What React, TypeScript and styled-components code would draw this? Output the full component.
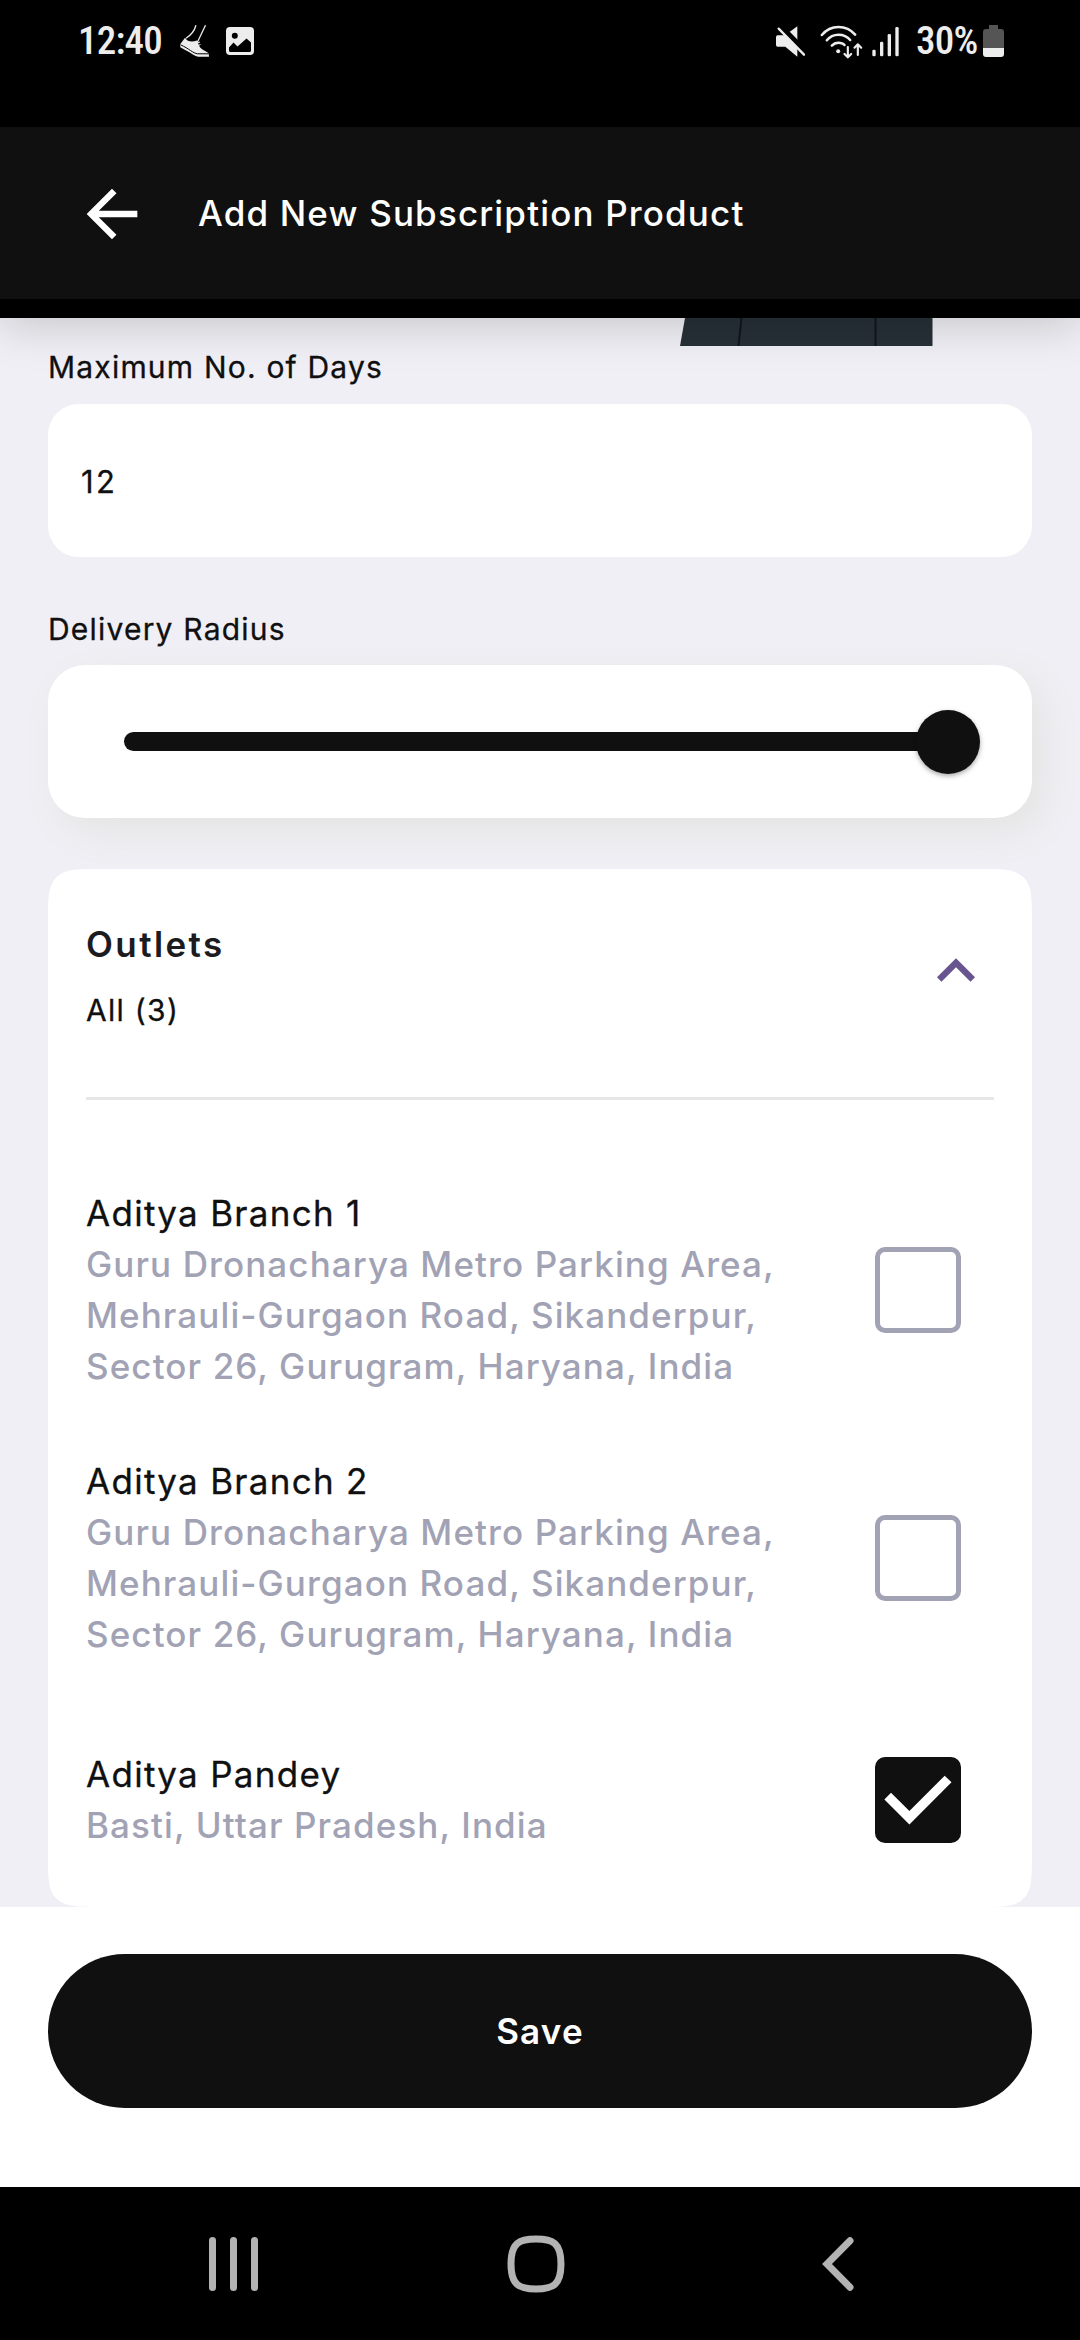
import React, { useState } from "react";
import styled, { createGlobalStyle, css } from "styled-components";

const ink = "#101010";
const muted = "#a2a2b5";
const canvas = "#f0eff5";
const statusTint = "#ededed";
const navTint = "#b3b3b3";

const GlobalStyle = createGlobalStyle`
  *, *::before, *::after { box-sizing: border-box; }
  body {
    margin: 0;
    background: ${canvas};
    font-family: Inter, "Liberation Sans", sans-serif;
    color: ${ink};
  }
`;

const Screen = styled.div`
  display: flex;
  flex-direction: column;
  width: 1080px;
  height: 2340px;
  overflow: hidden;
  background: ${canvas};
`;

/* Regular weight with slightly firmer strokes. */
const firmRegular = css`
  font-weight: 400;
  -webkit-text-stroke: 0.3px currentColor;
`;

/* ---------- status bar ---------- */

const TopArea = styled.header`
  position: relative;
  z-index: 1;
  flex: none;
  padding-bottom: 19px;
  background: #000;
  box-shadow: 0 8px 42px rgba(0, 0, 0, 0.17);
`;

const StatusBar = styled.div`
  display: flex;
  justify-content: space-between;
  height: 127px;
  padding: 0 76px 0 78px;
`;

const StatusGroup = styled.div`
  display: flex;
  align-items: center;
  height: 82px;
`;

const StatusText = styled.span<{ $width: number; $lead?: number }>`
  width: ${(p) => p.$width}px;
  margin-left: ${(p) => p.$lead ?? 0}px;
  font: 500 39px/46px Roboto, "Liberation Sans", sans-serif;
  font-stretch: 75%;
  letter-spacing: -0.8px;
  white-space: nowrap;
  color: ${statusTint};
`;

const StatusIcon = styled.svg<{ $lead?: number }>`
  display: block;
  flex: none;
  margin-left: ${(p) => p.$lead ?? 0}px;
  color: ${statusTint};
`;

/* ---------- app bar ---------- */

const AppBar = styled.div`
  display: flex;
  align-items: center;
  gap: 48px;
  height: 172px;
  padding: 1px 74px 0;
  background: ${ink};
  color: #fff;
`;

const IconButton = styled.button`
  display: block;
  flex: none;
  padding: 0;
  border: 0;
  background: none;
  color: inherit;
  svg { display: block; }
`;

const Title = styled.h1`
  margin: 0 0 2px;
  font-size: 35px;
  font-weight: 500;
  line-height: 42px;
  letter-spacing: 1.15px;
`;

/* ---------- form ---------- */

const Content = styled.main`
  display: flex;
  flex-direction: column;
  height: 1589px;
  padding: 0 48px;
`;

const Illustration = styled.svg`
  display: block;
  flex: none;
  margin: 0 0 3px 632px;
`;

const Field = styled.section`
  display: flex;
  flex-direction: column;
  gap: 18.5px;
`;

const Label = styled.label`
  ${firmRegular}
  font-size: 30px;
  line-height: 36px;
  letter-spacing: 1.2px;
`;

const panel = css`
  display: flex;
  align-items: center;
  height: 153px;
  background: #fff;
`;

const InputBox = styled.div`
  ${panel}
  ${firmRegular}
  margin-bottom: 54px;
  padding: 4px 33px 0;
  border-radius: 31px;
  font-size: 31px;
  line-height: 36px;
  letter-spacing: 2.4px;
`;

const SliderBox = styled.div`
  ${panel}
  margin-bottom: 51px;
  padding: 0 52px 0 76px;
  border-radius: 37px;
  box-shadow: 12px 14px 37px #e4e4e2;
`;

const Track = styled.div`
  flex: 1;
  height: 19px;
  margin-right: -32px;
  border-radius: 10px;
  background: ${ink};
`;

const Thumb = styled.div`
  width: 64px;
  height: 64px;
  border-radius: 50%;
  background: ${ink};
  box-shadow: 0 2px 5px rgba(0, 0, 0, 0.35);
`;

/* ---------- outlets ---------- */

const OutletCard = styled.section`
  display: flex;
  flex-direction: column;
  height: 1038px;
  padding: 54px 38px 31px;
  border-radius: 29px;
  background: #fff;
  @supports (corner-shape: squircle) {
    border-radius: 53px;
    corner-shape: squircle;
  }
`;

const CardHead = styled.div`
  display: flex;
  justify-content: space-between;
  align-items: flex-start;
  height: 177px;
  border-bottom: 3px solid #e7e7e7;
`;

const HeadText = styled.div`
  display: flex;
  flex-direction: column;
  gap: 27px;
`;

const HeadTitle = styled.h2`
  margin: 0;
  font-size: 35px;
  font-weight: 600;
  line-height: 42px;
  letter-spacing: 2.4px;
  color: #1c1b20;
`;

const HeadCount = styled.span`
  ${firmRegular}
  font-size: 30px;
  line-height: 36px;
  letter-spacing: 1.3px;
`;

const Expander = styled(IconButton)`
  margin-top: 10px;
  color: #68548e;
`;

const OutletList = styled.ul`
  display: flex;
  flex-direction: column;
  gap: 64px;
  margin: 0;
  padding: 88px 33px 0 0;
  list-style: none;
`;

const OutletRow = styled.li`
  display: flex;
  justify-content: space-between;
  align-items: center;
  min-height: 152px;
`;

const OutletText = styled.div`
  width: 730px;
  font-size: 35px;
  line-height: 51px;
`;

const OutletName = styled.div`
  ${firmRegular}
  letter-spacing: 1.28px;
`;

const OutletAddress = styled.div`
  font-weight: 500;
  letter-spacing: 1.1px;
  color: ${muted};
`;

const Checkbox = styled.button<{ $checked: boolean }>`
  display: block;
  flex: none;
  width: 86px;
  height: 86px;
  padding: 0;
  border: ${(p) => (p.$checked ? "0" : `5px solid ${muted}`)};
  border-radius: 10px;
  background: ${(p) => (p.$checked ? ink : "#fff")};
  svg { display: block; }
`;

/* ---------- footer ---------- */

const Footer = styled.footer`
  flex: none;
  height: 280px;
  padding: 47px 48px 0;
  background: #fff;
`;

const SaveButton = styled.button`
  display: flex;
  align-items: center;
  justify-content: center;
  width: 100%;
  height: 153.5px;
  padding: 0;
  border: 0;
  border-radius: 77px;
  background: ${ink};
  color: #fff;
  font: 600 35px/42px Inter, "Liberation Sans", sans-serif;
  letter-spacing: 1.2px;
`;

const NavBar = styled.nav`
  display: flex;
  align-items: center;
  justify-content: space-between;
  height: 153px;
  padding: 0 226px 0 208px;
  background: #000;
  color: ${navTint};
  svg { display: block; }
`;

const HomeGlyph = styled.svg`
  margin-right: 9px;
`;

const outlets = [
  {
    name: "Aditya Branch 1",
    address: ["Guru Dronacharya Metro Parking Area,", "Mehrauli-Gurgaon Road, Sikanderpur,", "Sector 26, Gurugram, Haryana, India"],
  },
  {
    name: "Aditya Branch 2",
    address: ["Guru Dronacharya Metro Parking Area,", "Mehrauli-Gurgaon Road, Sikanderpur,", "Sector 26, Gurugram, Haryana, India"],
  },
  { name: "Aditya Pandey", address: ["Basti, Uttar Pradesh, India"] },
];

const ShoeIcon = () => (
  <StatusIcon width="30" height="33" viewBox="0 0 30 33" fill="none">
    <path d="M16 .3C14.500 5.500 12.500 9.500 6 13.200" stroke="currentColor" strokeWidth="1.300" />
    <path d="M25.500.3 17.500 17" stroke="currentColor" strokeWidth="1.300" />
    <path
      d="M.2 19.300 5 12.700C7.500 16.800 12 17.300 17 15.500L19.500 21.500C21.500 25.500 27 25.500 28.800 29L29 31.700H18.500C15 31.700 12 28.300.3 22.300Z"
      fill="currentColor"
    />
    <path d="M.5 19.800C9 23.500 13 28.300 17.500 28.800H28.700" stroke="#000" strokeWidth="1" />
    <path d="M16 18.500 20 17M17.200 21 20.500 19.500" stroke="currentColor" strokeWidth="1" />
  </StatusIcon>
);

const PictureIcon = () => (
  <StatusIcon $lead={16} width="28" height="28" viewBox="0 0 28 28">
    <rect width="28" height="28" rx="4" fill="currentColor" />
    <circle cx="8.800" cy="8.700" r="3" fill="#000" />
    <path d="M3 20.500 7.500 15.500 11.500 19.500 20.500 11.500 25 15.500V23.500Q25 25 23.500 25H4.500Q3 25 3 23.500Z" fill="#000" />
  </StatusIcon>
);

const MuteIcon = () => (
  <StatusIcon width="31" height="33" viewBox="45 75 93 99" fill="none">
    <path d="M53 106H75L112 79V170L76 140H53Q48 140 48 134V112Q48 106 53 106Z" fill="currentColor" />
    <path d="M50 68 142 162" stroke="#000" strokeWidth="18" />
    <path d="M56 86 132 164" stroke="currentColor" strokeWidth="7" strokeLinecap="round" />
  </StatusIcon>
);

const WifiIcon = () => (
  <StatusIcon $lead={13} width="45" height="35" viewBox="176 70 134 105" fill="none" stroke="currentColor" strokeWidth="7.500" strokeLinecap="round" strokeLinejoin="round">
    <path d="M184 103Q204 79 234 79T284 102" />
    <path d="M199 119Q212 102 234 102T269 118" />
    <path d="M214 135Q222 126 234 126T252 133" />
    <circle cx="233" cy="152" r="6" fill="currentColor" stroke="none" />
    <path d="M262 139V170M252 160 262 170 272 160M292 163V131M282 141 292 131 302 141" strokeWidth="6.500" />
  </StatusIcon>
);

const SignalIcon = () => (
  <StatusIcon $lead={8} width="27" height="31" viewBox="336 77 81 93" fill="currentColor">
    <rect x="337" y="148" width="10" height="20" rx="4" />
    <rect x="360" y="124" width="10" height="44" rx="4" />
    <rect x="383" y="101" width="10" height="67" rx="4" />
    <rect x="406" y="80" width="10" height="88" rx="4" />
  </StatusIcon>
);

const BatteryIcon = () => (
  <StatusIcon width="21" height="32" viewBox="0 0 21 32">
    <path d="M6 0H15V4H18Q21 4 21 7V23H0V7Q0 4 3 4H6Z" fill="#555" />
    <path d="M0 23H21V29Q21 32 18 32H3Q0 32 0 29Z" fill="currentColor" />
  </StatusIcon>
);

export default function App() {
  const [selected, setSelected] = useState<string[]>(["Aditya Pandey"]);
  const toggle = (name: string) =>
    setSelected((s) => (s.includes(name) ? s.filter((n) => n !== name) : [...s, name]));

  return (
    <Screen>
      <GlobalStyle />
      <TopArea>
        <StatusBar>
          <StatusGroup>
            <StatusText $width={102}>12:40</StatusText>
            <ShoeIcon />
            <PictureIcon />
          </StatusGroup>
          <StatusGroup>
            <MuteIcon />
            <WifiIcon />
            <SignalIcon />
            <StatusText $lead={17} $width={67}>30%</StatusText>
            <BatteryIcon />
          </StatusGroup>
        </StatusBar>
        <AppBar>
          <IconButton aria-label="Back">
            <svg width="76" height="76" viewBox="0 0 24 24" fill="currentColor">
              <path d="M20 11H7.830l5.590-5.590L12 4l-8 8 8 8 1.410-1.410L7.830 13H20v-2z" />
            </svg>
          </IconButton>
          <Title>Add New Subscription Product</Title>
        </AppBar>
      </TopArea>

      <Content>
        <Illustration width="253" height="28" viewBox="0 0 253 28">
          <path d="M5 0H252.500V28H0Z" fill="#263036" />
          <path d="M61.500 0 58.500 28M195.500 0V28" stroke="#10171a" strokeWidth="2" />
        </Illustration>
        <Field>
          <Label>Maximum No. of Days</Label>
          <InputBox>12</InputBox>
        </Field>
        <Field>
          <Label>Delivery Radius</Label>
          <SliderBox>
            <Track />
            <Thumb />
          </SliderBox>
        </Field>

        <OutletCard>
          <CardHead>
            <HeadText>
              <HeadTitle>Outlets</HeadTitle>
              <HeadCount>All (3)</HeadCount>
            </HeadText>
            <Expander aria-label="Collapse">
              <svg width="76" height="76" viewBox="0 0 24 24" fill="currentColor">
                <path d="M12 8l-6 6 1.410 1.410L12 10.830l4.590 4.580L18 14z" />
              </svg>
            </Expander>
          </CardHead>
          <OutletList>
            {outlets.map(({ name, address }) => {
              const checked = selected.includes(name);
              return (
                <OutletRow key={name}>
                  <OutletText>
                    <OutletName>{name}</OutletName>
                    {address.map((line) => (
                      <OutletAddress key={line}>{line}</OutletAddress>
                    ))}
                  </OutletText>
                  <Checkbox $checked={checked} aria-label={name} onClick={() => toggle(name)}>
                    {checked && (
                      <svg width="86" height="86" viewBox="0 0 86 86" fill="#fff">
                        <path d="M9.400 42.400 16 35.700 34.400 54 69.700 18.700 76.500 25.300 34.400 67.400Z" />
                      </svg>
                    )}
                  </Checkbox>
                </OutletRow>
              );
            })}
          </OutletList>
        </OutletCard>
      </Content>

      <Footer>
        <SaveButton>Save</SaveButton>
      </Footer>

      <NavBar>
        <svg width="50" height="54" viewBox="0 0 50 54" fill="currentColor">
          <rect x="1" y="0" width="7" height="54" rx="3.500" />
          <rect x="22" y="0" width="7" height="54" rx="3.500" />
          <rect x="43" y="0" width="7" height="54" rx="3.500" />
        </svg>
        <HomeGlyph width="58" height="58" viewBox="0 0 58 58" fill="none" stroke="currentColor" strokeWidth="7">
          <path d="M29 4C46 4 54 8 54 29S46 54 29 54 4 50 4 29 12 4 29 4Z" />
        </HomeGlyph>
        <svg width="32" height="54" viewBox="0 0 32 54" fill="none" stroke="currentColor" strokeWidth="7" strokeLinecap="round">
          <path d="M28 3.800 5 27 28 50.200" />
        </svg>
      </NavBar>
    </Screen>
  );
}
